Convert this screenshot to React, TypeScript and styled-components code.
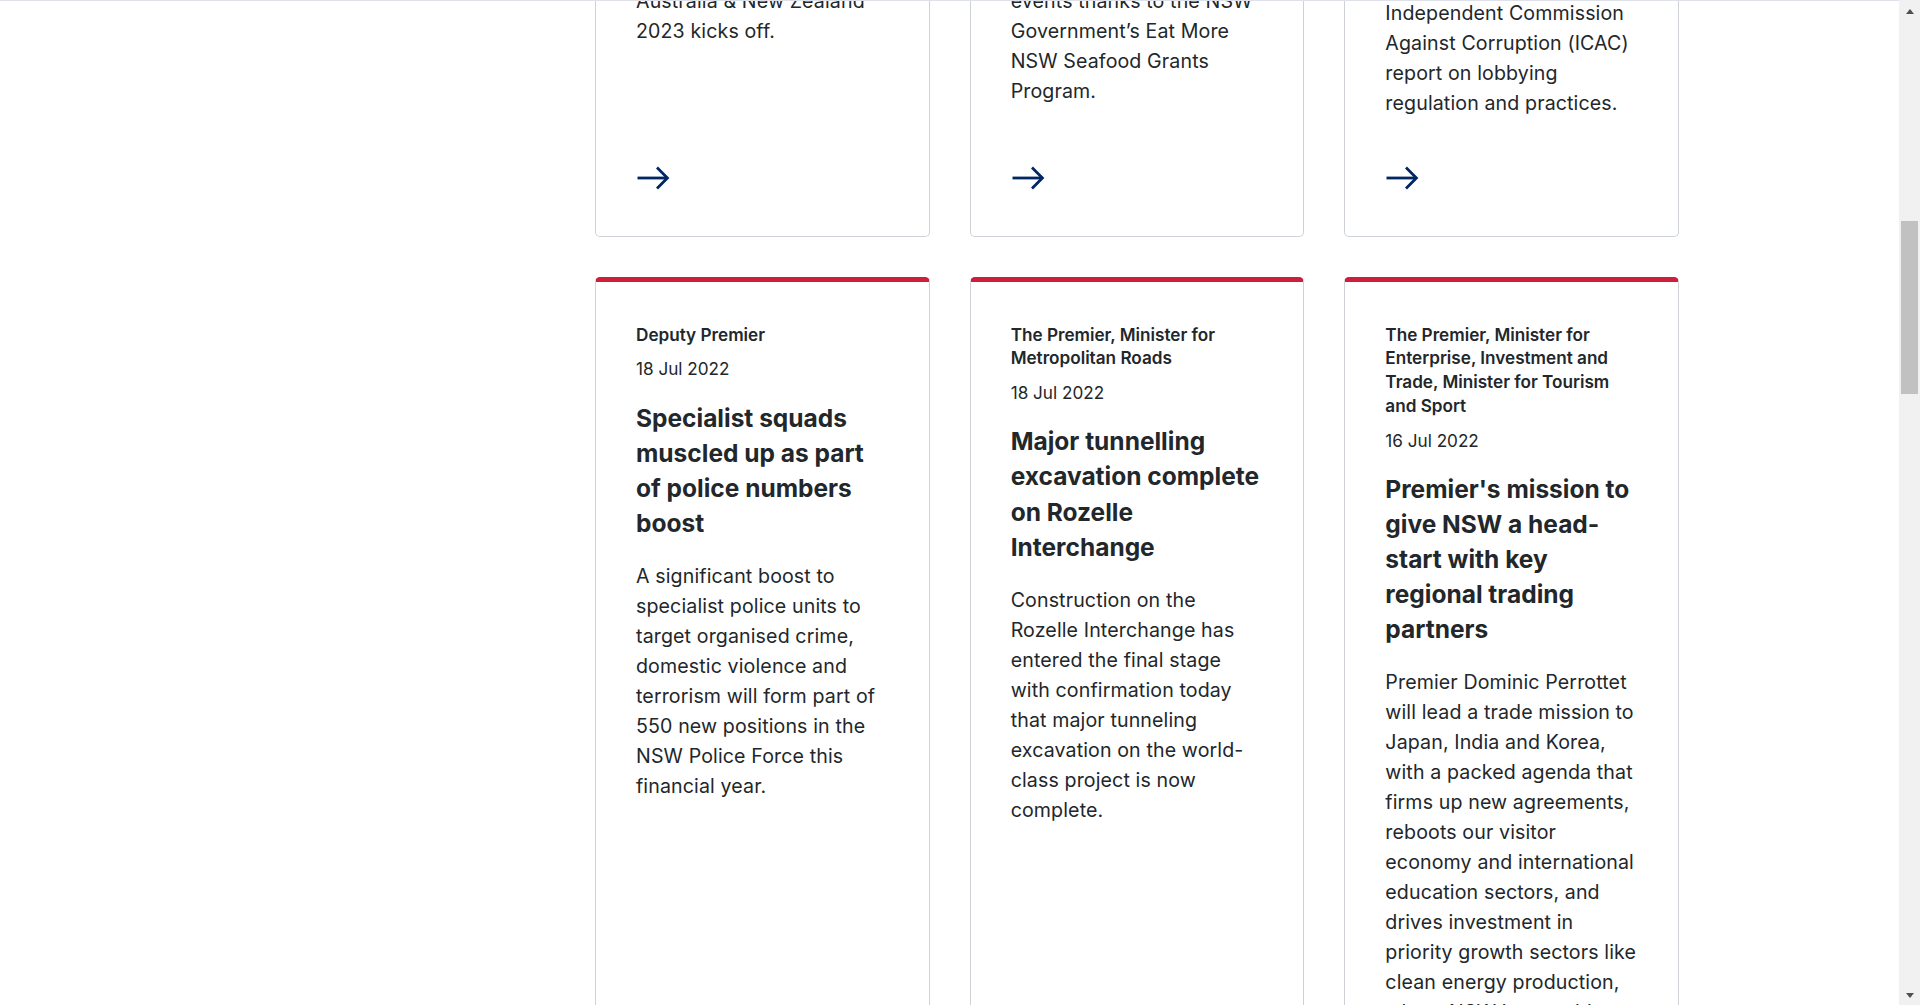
import React, { useLayoutEffect, useRef } from "react";
import styled, { createGlobalStyle } from "styled-components";

const GlobalStyle = createGlobalStyle`
  *, *::before, *::after { box-sizing: border-box; }
  html { scrollbar-width: none; }
  html, body { margin: 0; padding: 0; background: #ffffff; }
  body {
    font-family: Inter, "Noto Sans", "Liberation Sans", sans-serif;
    color: #22272b;
    -webkit-font-smoothing: antialiased;
  }
  ::-webkit-scrollbar { width: 0; height: 0; }
`;

/* Classic scrollbar drawn over the right edge of the window */
const ScrollBar = styled.div`
  position: fixed;
  top: 0;
  right: 0;
  bottom: 0;
  width: 21px;
  background: #f1f1f1;
  display: flex;
  flex-direction: column;
  z-index: 30;
`;

const ScrollButton = styled.div<{ $down?: boolean }>`
  height: 21px;
  flex: none;
  display: flex;
  align-items: center;
  justify-content: center;
  &::before {
    content: "";
    width: 0;
    height: 0;
    border-left: 4.5px solid transparent;
    border-right: 4.5px solid transparent;
    ${(p) =>
      p.$down
        ? "border-top: 5px solid #505050; margin-top: 2px;"
        : "border-bottom: 5px solid #505050; margin-top: 2px;"}
  }
`;

const ScrollTrack = styled.div`
  flex: 1;
  padding: 200px 2px 0;
`;

const ScrollThumb = styled.div`
  height: 173px;
  background: #c1c1c1;
`;

const PageFrame = styled.div`
  margin-right: 21px;
`;

const TopEdge = styled.div`
  position: fixed;
  top: 0;
  left: 0;
  right: 21px;
  height: 1px;
  background: #dfe1ea;
  z-index: 20;
`;

const SiteHeader = styled.header`
  border-bottom: 1px solid #dfe1ea;
`;

const HeaderInner = styled.div`
  max-width: 1469px;
  margin: 0 auto;
  padding: 0 5px;
  height: 120px;
  display: flex;
  align-items: center;
  justify-content: space-between;
`;

const Brand = styled.div`
  display: flex;
  align-items: center;
  gap: 16px;
  font-size: 22px;
  font-weight: 700;
  color: #002664;
`;

const BrandMark = styled.span`
  width: 48px;
  height: 48px;
  border-radius: 50%;
  background: #d7153a;
`;

const Nav = styled.nav`
  display: flex;
  gap: 40px;
  font-size: 19.6px;
  color: #002664;
`;

const Hero = styled.section`
  background: #f2f2f2;
  padding: 80px 0 90px;
`;

const HeroInner = styled.div`
  max-width: 1469px;
  margin: 0 auto;
  padding: 0 5px;
`;

const HeroTitle = styled.h1`
  margin: 0 0 24px;
  font-size: 58px;
  line-height: 1.2;
  font-weight: 700;
  color: #002664;
`;

const HeroText = styled.p`
  margin: 0;
  max-width: 900px;
  font-size: 24px;
  line-height: 1.5;
`;

const Container = styled.main`
  max-width: 1469px;
  margin: 0 auto;
  padding: 80px 5px 120px;
`;

const Layout = styled.div`
  display: grid;
  grid-template-columns: 335px 1fr;
  column-gap: 40px;
  align-items: start;
`;

const Sidebar = styled.aside`
  display: flex;
  flex-direction: column;
  gap: 14px;
`;

const SidebarTitle = styled.h2`
  margin: 0 0 6px;
  font-size: 24.5px;
  font-weight: 700;
`;

const FilterItem = styled.label`
  display: flex;
  align-items: center;
  gap: 12px;
  font-size: 19.6px;
`;

const FilterBox = styled.span`
  width: 22px;
  height: 22px;
  border: 2px solid #22272b;
  border-radius: 3px;
`;

const CardGrid = styled.div`
  display: grid;
  grid-template-columns: repeat(3, minmax(0, 1fr));
  gap: 40px;
`;

const Card = styled.article`
  display: flex;
  flex-direction: column;
  background: #ffffff;
  border: 1px solid #cfd2d6;
  border-top: 5px solid #cd1f3b;
  border-radius: 5px;
  padding: 41px 40px 40px;
`;

const Author = styled.p`
  margin: 0 0 10px;
  font-size: 17.15px;
  line-height: 23.7px;
  font-weight: 600;
`;

const DateText = styled.p`
  margin: 0 0 18.6px;
  font-size: 17.15px;
  line-height: 25.6px;
  font-weight: 400;
`;

const Title = styled.h3`
  margin: 0 0 20px;
  font-size: 24.5px;
  line-height: 35.1px;
  font-weight: 700;
`;

const Summary = styled.p`
  margin: 0;
  font-size: 19.6px;
  line-height: 30px;
  font-weight: 400;
  letter-spacing: 0.12px;
`;

const ArrowRow = styled.div`
  margin-top: auto;
  padding-top: 42px;
  height: 78px;
  display: flex;
  color: #002664;
`;

const Pagination = styled.nav`
  display: flex;
  justify-content: center;
  gap: 12px;
  margin-top: 80px;
`;

const PageLink = styled.span<{ $active?: boolean }>`
  min-width: 44px;
  height: 44px;
  padding: 0 12px;
  display: flex;
  align-items: center;
  justify-content: center;
  border-radius: 4px;
  font-size: 19.6px;
  color: ${(p) => (p.$active ? "#ffffff" : "#002664")};
  background: ${(p) => (p.$active ? "#002664" : "transparent")};
`;

const Footer = styled.footer`
  background: #f2f2f2;
  padding: 80px 0 0;
`;

const FooterInner = styled.div`
  max-width: 1469px;
  margin: 0 auto;
  padding: 0 5px 80px;
  display: grid;
  grid-template-columns: repeat(4, 1fr);
  gap: 40px;
`;

const FooterCol = styled.div`
  display: flex;
  flex-direction: column;
  gap: 16px;
  font-size: 19.6px;
  line-height: 1.5;
`;

const FooterHeading = styled.h4`
  margin: 0 0 8px;
  font-size: 22px;
  font-weight: 700;
`;

const Acknowledgement = styled.div`
  max-width: 1469px;
  margin: 0 auto;
  padding: 60px 5px 200px;
  border-top: 1px solid #cfd2d6;
  font-size: 19.6px;
  line-height: 1.5;
`;

const BottomBar = styled.div`
  background: #002664;
  color: #ffffff;
  padding: 40px 0;
  font-size: 17px;
`;

const BottomInner = styled.div`
  max-width: 1469px;
  margin: 0 auto;
  padding: 0 5px;
`;

const ArrowIcon = () => (
  <svg width="36" height="36" viewBox="0 0 36 36" fill="none" aria-hidden="true">
    <path d="M1.5 18H30.5" stroke="currentColor" strokeWidth="2.8" />
    <path d="M21 7.6L31.4 18L21 28.4" stroke="currentColor" strokeWidth="2.8" strokeLinejoin="miter" />
  </svg>
);

type NewsItem = { author: string; date: string; title: string; summary: string };

const news: NewsItem[] = [
  {
    author: "The Premier, Minister for Tourism and Sport",
    date: "19 Jul 2022",
    title: "Countdown to FIFA World Cup 2023",
    summary:
      "The countdown to the FIFA Women's World Cup Australia & New Zealand 2023 kicks off.",
  },
  {
    author: "Deputy Premier, Minister for Regional NSW",
    date: "19 Jul 2022",
    title: "Seafood festivals reel in the crowds",
    summary:
      "Seafood lovers can look forward to a host of new events thanks to the NSW Government’s Eat More NSW Seafood Grants Program.",
  },
  {
    author: "The Premier",
    date: "18 Jul 2022",
    title: "Government responds to ICAC lobbying report",
    summary:
      "The Government has today responded to the Independent Commission Against Corruption (ICAC) report on lobbying regulation and practices.",
  },
  {
    author: "Deputy Premier",
    date: "18 Jul 2022",
    title: "Specialist squads muscled up as part of police numbers boost",
    summary:
      "A significant boost to specialist police units to target organised crime, domestic violence and terrorism will form part of 550 new positions in the NSW Police Force this financial year.",
  },
  {
    author: "The Premier, Minister for Metropolitan Roads",
    date: "18 Jul 2022",
    title: "Major tunnelling excavation complete on Rozelle Interchange",
    summary:
      "Construction on the Rozelle Interchange has entered the final stage with confirmation today that major tunneling excavation on the world-class project is now complete.",
  },
  {
    author:
      "The Premier, Minister for Enterprise, Investment and Trade, Minister for Tourism and Sport",
    date: "16 Jul 2022",
    title: "Premier's mission to give NSW a head-start with key regional trading partners",
    summary:
      "Premier Dominic Perrottet will lead a trade mission to Japan, India and Korea, with a packed agenda that firms up new agreements, reboots our visitor economy and international education sectors, and drives investment in priority growth sectors like clean energy production, where NSW is a world leader.",
  },
  {
    author: "Minister for Health",
    date: "15 Jul 2022",
    title: "New hospital upgrade for the Central Coast",
    summary:
      "Patients on the Central Coast will benefit from a major hospital upgrade, with construction now under way.",
  },
  {
    author: "Minister for Education",
    date: "15 Jul 2022",
    title: "More teachers for regional schools",
    summary:
      "Hundreds of new teachers will be recruited to regional and remote schools across the state.",
  },
  {
    author: "Minister for Transport",
    date: "14 Jul 2022",
    title: "New trains roll out across the network",
    summary:
      "Commuters will enjoy more comfortable journeys as new trains enter service across the network.",
  },
];

export default function App() {
  const targetRef = useRef<HTMLElement | null>(null);

  useLayoutEffect(() => {
    const el = targetRef.current;
    if (!el) return;
    const top = el.getBoundingClientRect().top + window.scrollY;
    window.scrollTo(0, top - 277);
  }, []);

  return (
    <>
      <GlobalStyle />
      <TopEdge />
      <ScrollBar aria-hidden="true">
        <ScrollButton />
        <ScrollTrack>
          <ScrollThumb />
        </ScrollTrack>
        <ScrollButton $down />
      </ScrollBar>
      <PageFrame>
        <SiteHeader>
          <HeaderInner>
            <Brand>
              <BrandMark />
              NSW Government
            </Brand>
            <Nav>
              <span>Services</span>
              <span>Departments</span>
              <span>News</span>
              <span>About NSW</span>
            </Nav>
          </HeaderInner>
        </SiteHeader>
        <Hero>
          <HeroInner>
            <HeroTitle>News</HeroTitle>
            <HeroText>
              The latest news and media releases from the NSW Government, Premier and
              Ministers.
            </HeroText>
          </HeroInner>
        </Hero>
        <Container>
          <Layout>
            <Sidebar>
              <SidebarTitle>Filter results</SidebarTitle>
              <FilterItem>
                <FilterBox />
                Media releases
              </FilterItem>
              <FilterItem>
                <FilterBox />
                Announcements
              </FilterItem>
              <FilterItem>
                <FilterBox />
                Speeches
              </FilterItem>
            </Sidebar>
            <div>
              <CardGrid>
                {news.map((item, i) => (
                  <Card key={item.title} ref={i === 3 ? targetRef : undefined}>
                    <Author>{item.author}</Author>
                    <DateText>{item.date}</DateText>
                    <Title>{item.title}</Title>
                    <Summary>{item.summary}</Summary>
                    <ArrowRow>
                      <ArrowIcon />
                    </ArrowRow>
                  </Card>
                ))}
              </CardGrid>
              <Pagination>
                <PageLink $active>1</PageLink>
                <PageLink>2</PageLink>
                <PageLink>3</PageLink>
                <PageLink>…</PageLink>
                <PageLink>Next</PageLink>
              </Pagination>
            </div>
          </Layout>
        </Container>
        <Footer>
          <FooterInner>
            <FooterCol>
              <FooterHeading>Popular</FooterHeading>
              <span>Find a job</span>
              <span>Driver licences</span>
            </FooterCol>
            <FooterCol>
              <FooterHeading>What's happening</FooterHeading>
              <span>News</span>
              <span>Events</span>
            </FooterCol>
            <FooterCol>
              <FooterHeading>Departments</FooterHeading>
              <span>All departments</span>
              <span>Ministers</span>
            </FooterCol>
            <FooterCol>
              <FooterHeading>About NSW</FooterHeading>
              <span>Contact us</span>
              <span>Accessibility</span>
            </FooterCol>
          </FooterInner>
          <Acknowledgement>
            We pay respect to the Traditional Custodians and First Peoples of NSW, and
            acknowledge their continued connection to their country and culture.
          </Acknowledgement>
          <BottomBar>
            <BottomInner>Copyright © 2022</BottomInner>
          </BottomBar>
        </Footer>
      </PageFrame>
    </>
  );
}
